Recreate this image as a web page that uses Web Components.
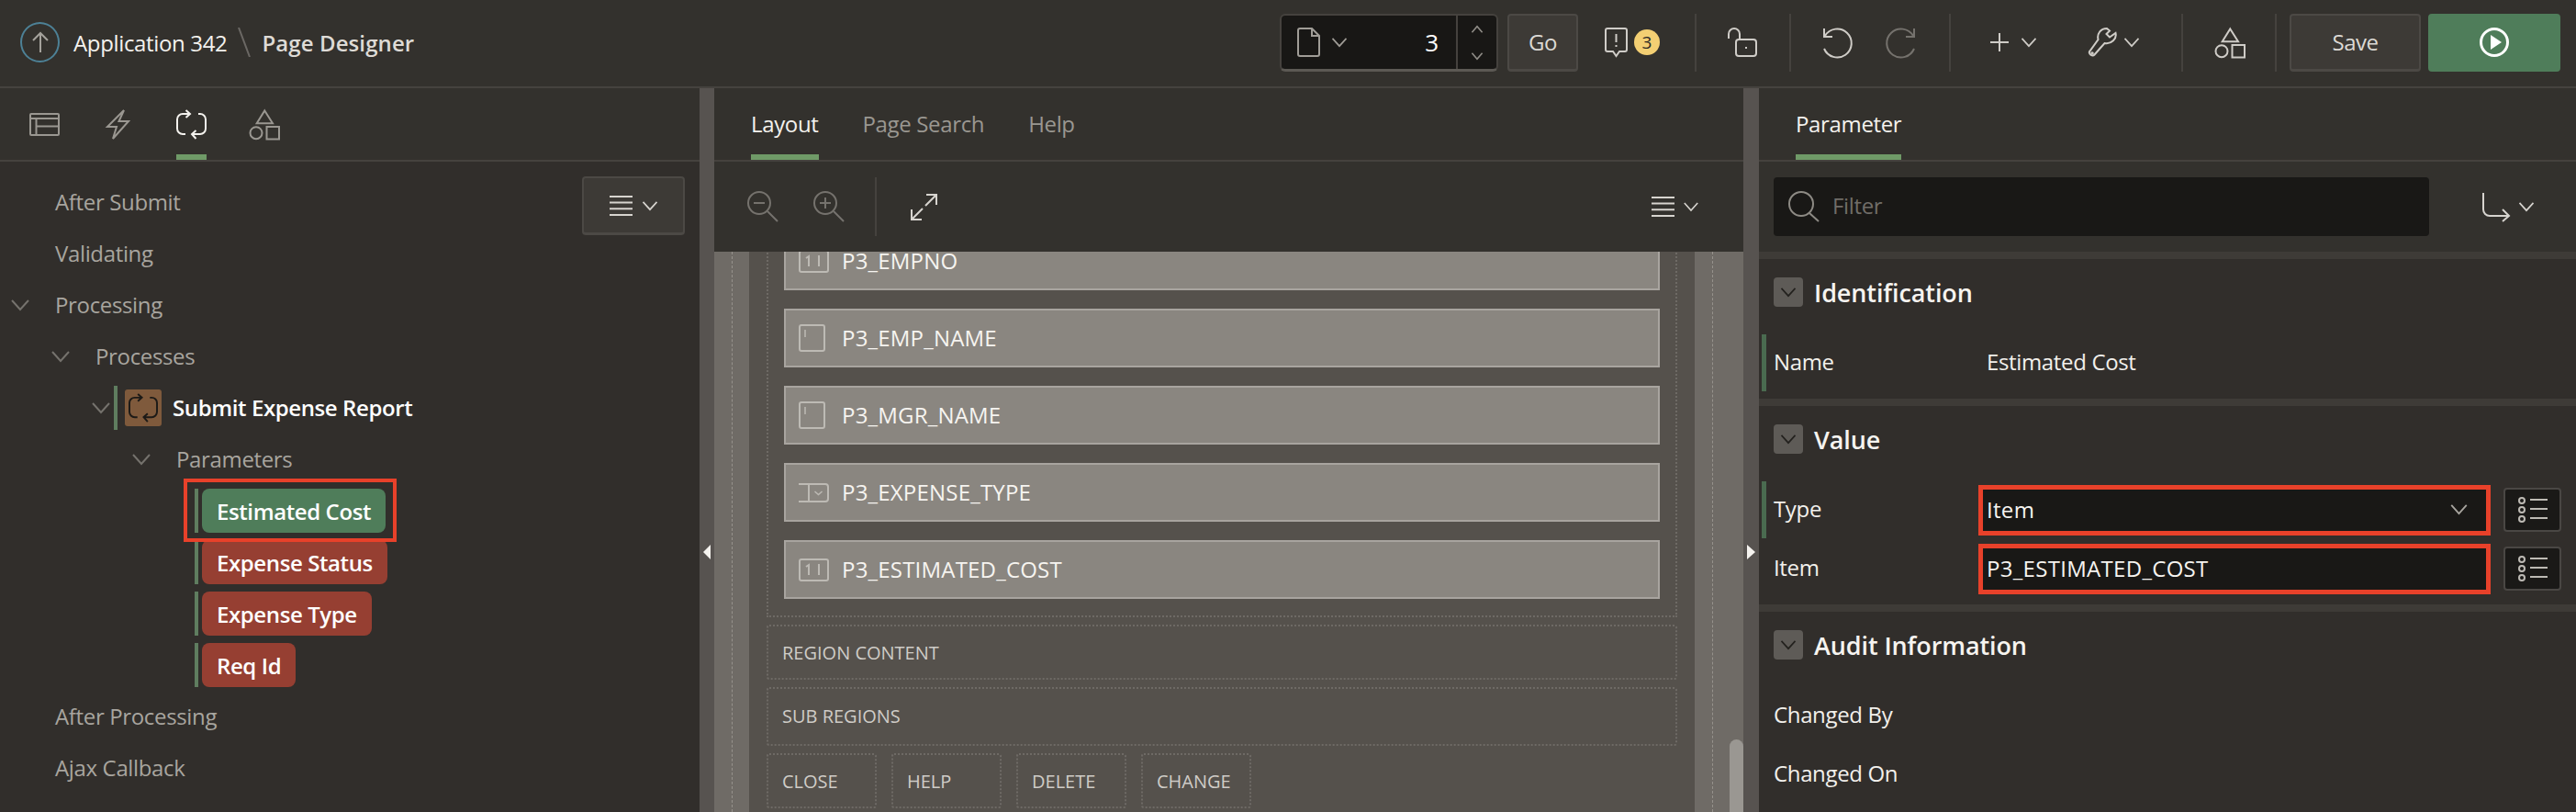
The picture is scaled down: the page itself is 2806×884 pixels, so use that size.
<!DOCTYPE html>
<html>
<head>
<meta charset="utf-8">
<title>Page Designer</title>
<style>
  html, body { margin: 0; padding: 0; background: #312e2b; }
  body { width: 2806px; height: 884px; overflow: hidden; font: 24px "Open Sans", "Liberation Sans", sans-serif; color: #f2f0ec; }
</style>
</head>
<body>
<pd-app>
  <pd-topbar slot="top"></pd-topbar>
  <pd-left slot="left"></pd-left>
  <pd-center slot="center"></pd-center>
  <pd-right slot="right"></pd-right>
</pd-app>

<script>
const ICONS = {
  table: [33, 25, '<rect x="1" y="1" width="31" height="23" rx="1"/><path d="M1 6h31M7.500 6v18M7.500 14.500h24.500"/>'],
  bolt: [25, 33, '<path d="M19 1L1 19h10L7 32l17-19H13.500z"/>'],
  process: [33, 33, '<path d="M15 5H7a6 6 0 0 0-6 6v10a6 6 0 0 0 6 6h3M24 5h2a6 6 0 0 1 6 6v10a6 6 0 0 1-6 6H17M10.500 1l4.500 4-4.500 4M21.500 23l-4.500 4 4.500 5"/>'],
  shapes: [33, 33, '<path d="M16.300 1.500L25 15.300H7.700z"/><circle cx="7" cy="25.700" r="6.500"/><rect x="18.500" y="19" width="13.500" height="13.500"/>'],
  chevron: [20, 12, '<path d="M1 1l9 10 9-10"/>'],
  chevronUp: [16, 10, '<path d="M1 9l7-8 7 8"/>'],
  chevronDown: [16, 10, '<path d="M1 1l7 8 7-8"/>'],
  menu: [25, 22, '<path d="M0 1h25M0 7.600h25M0 14.300h25M0 21h25"/>'],
  up: [20, 22, '<path d="M10 22V1M2 9l8-8 8 8"/>'],
  page: [25, 32, '<path d="M3 1h13l8 8v20a2 2 0 0 1-2 2H3a2 2 0 0 1-2-2V3a2 2 0 0 1 2-2zM16 1v8h8"/>'],
  message: [25, 32, '<path d="M3 1h19a2 2 0 0 1 2 2v21a2 2 0 0 1-2 2h-6l-3.500 5-3.500-5H3a2 2 0 0 1-2-2V3a2 2 0 0 1 2-2z"/><path d="M12.500 7v9M12.500 19v2"/>'],
  lock: [32, 32, '<path d="M1 12V7a6 6 0 0 1 12 0v6"/><rect x="9" y="13" width="22" height="18" rx="3"/><path d="M20 21v2"/>'],
  undo: [31, 33, '<path d="M2 1v9h9M3 9A15.500 15.500 0 1 1 2 23"/>'],
  redo: [31, 33, '<path d="M29 1v9h-9M28 9A15.500 15.500 0 1 0 29 23"/>'],
  plus: [20, 20, '<path d="M10 0v20M0 10h20"/>'],
  wrench: [30, 32, '<path d="M10.500 13C9 7 13 1 20 1l3 2.500L19.500 7l3.500 3.500L29.500 6c1.500 6-4.500 12.500-12 11L6.500 29.500C4 32.500-1 28 1.500 25.500z"/><circle cx="4" cy="28" r=".8"/>'],
  zoomOut: [34, 34, '<circle cx="13" cy="13" r="12"/><path d="M22 22l11 11M7 13h12"/>'],
  zoomIn: [34, 34, '<circle cx="13" cy="13" r="12"/><path d="M22 22l11 11M7 13h12M13 7v12"/>'],
  expand: [29, 29, '<path d="M16 13L28 1M17 1h11v11M13 16L1 28M1 17v11h11"/>'],
  search: [34, 34, '<circle cx="14" cy="14" r="13"/><path d="M23 24l10 9"/>'],
  group: [31, 31, '<path d="M2 0v18a7 7 0 0 0 7 7h20M23 18l7 7-7 6"/>'],
  options: [32, 28, '<circle cx="4" cy="4" r="3"/><circle cx="4" cy="14" r="3"/><circle cx="4" cy="24" r="3"/><path d="M13 3h19M13 13h19M13 23h19"/>'],
  itemNumber: [33, 25, '<rect x="1" y="1" width="31" height="23" rx="2"/><path d="M8 9l3-2v11M22 6v12"/>'],
  itemText: [29, 30, '<rect x="1" y="1" width="27" height="28" rx="2"/><path d="M7 6v8" stroke-width="1.500"/>'],
  itemSelect: [33, 21, '<path d="M0 1h11M0 20h11M11 1v19M11 1h18a3 3 0 0 1 3 3v13a3 3 0 0 1-3 3H11"/><path d="M17.500 9l4 3.500 4-3.500" stroke-width="1.500"/>']
};

class PdIcon extends HTMLElement {
  constructor() {
    super();
    this.attachShadow({ mode: "open" });
  }

  connectedCallback() {
    const icon = ICONS[this.getAttribute("name")];
    const w = this.getAttribute("w") || icon[0];
    const h = this.getAttribute("h") || icon[1];
    this.shadowRoot.innerHTML = `
    <style>
    :host{ display: inline-flex; flex: none; line-height: 0; }
    svg{ fill: none; stroke: currentColor; stroke-width: 2; overflow: visible; }
    </style>
    <svg width="${w}" height="${h}" viewBox="0 0 ${icon[0]} ${icon[1]}">${icon[2]}</svg>`;
  }
}
customElements.define("pd-icon", PdIcon);

class PdApp extends HTMLElement {
  constructor() {
    super();
    this.attachShadow({ mode: "open" }).innerHTML = `
    <style>
    :host{ display: grid; grid-template-columns: 762px 16px 1121px 17px 1fr; grid-template-rows: 96px 788px; width: 2806px; height: 884px; }
    ::slotted([slot=top]){ grid-column: 1 / -1; }
    .split{ background: #575350; display: flex; align-items: center; justify-content: center; }
    .split i{ display: block; width: 0; height: 0; border: 8px solid transparent; margin-top: 222px; }
    .l i{ border-right: 8px solid #f5f3ef; border-left: 0; }
    .r i{ border-left: 9px solid #f5f3ef; border-right: 0; }
    </style>
    <slot name="top"></slot>
    <slot name="left"></slot>
    <div class="split l"><i></i></div>
    <slot name="center"></slot>
    <div class="split r"><i></i></div>
    <slot name="right"></slot>`;
  }
}
customElements.define("pd-app", PdApp);

class PdButton extends HTMLElement {
  constructor() {
    super();
    this.attachShadow({ mode: "open" }).innerHTML = `
    <style>
    :host{ display: inline-flex; box-sizing: border-box; align-items: center; justify-content: center; gap: 10px; height: 63px; flex: none;
      background: #3d3a36; border: 2px solid #4c4945; border-bottom-width: 3px; border-radius: 4px; color: #dcd9d4; font-size: 24px; letter-spacing: -.5px; }
    </style>
    <slot></slot>`;
  }
}
customElements.define("pd-button", PdButton);

class PdTopbar extends HTMLElement {
  constructor() {
    super();
    this.attachShadow({ mode: "open" }).innerHTML = `
    <style>
    :host{ display: flex; box-sizing: border-box; align-items: center; height: 96px; padding: 0 0 2px 22px; background: #33312d; border-bottom: 2px solid #45423e; color: #cfccc7; }
    .home{ box-sizing: border-box; width: 43px; height: 44px; border: 2px solid #4d8196; border-radius: 50%; display: flex; align-items: center; justify-content: center; color: #a5a29c; }
    .app{ margin-left: 15px; font-size: 24px; color: #f4f2ee; letter-spacing: -.35px; }
    .slash{ margin: 0 12px; display: flex; }
    .title{ font-size: 24px; font-weight: 600; color: #dedbd6; letter-spacing: .1px; }
    .tools{ margin-left: auto; display: flex; align-items: center; height: 63px; margin-right: 17px; }
    .sel{ box-sizing: border-box; width: 238px; height: 63px; background: #181715; border: 2px solid #45423e; border-bottom: 3px solid #5c5954; border-radius: 6px; display: flex; align-items: center; }
    .sel .ic{ display: flex; align-items: center; gap: 12px; padding-left: 17px; width: 106px; box-sizing: border-box; color: #a09d97; }
    .sel b{ font-weight: 400; text-align: right; color: #fff; font-size: 26px; box-sizing: border-box; margin-left: 2px; width: 82px; padding-right: 19px; }
    .spin{ flex: 1; align-self: stretch; border-left: 2px solid #45423e; display: flex; flex-direction: column; align-items: center; justify-content: space-between; padding: 11px 0 10px; color: #908d87; box-sizing: border-box; }
    .div{ width: 2px; height: 63px; background: #45423e; flex: none; }
    .badge{ width: 28px; height: 28px; margin-left: 7px; border-radius: 50%; background: #f3cf73; color: #2b2926; font-size: 19px; display: flex; align-items: center; justify-content: center; line-height: 1; }
    .run{ background: #4f7d5a; border-color: #4f7d5a; width: 144px; margin-left: 8px; }
    .play{ box-sizing: border-box; width: 32px; height: 32px; border: 3px solid #fff; border-radius: 50%; display: flex; align-items: center; justify-content: center; }
    .play i{ width: 0; height: 0; border-left: 12px solid #fff; border-top: 8px solid transparent; border-bottom: 8px solid transparent; margin-left: 3px; }
    .dim{ color: #75726d; }
    </style>
    <span class="home"><pd-icon name="up"></pd-icon></span>
    <span class="app">Application 342</span>
    <span class="slash"><svg width="14" height="32"><path d="M1 0l12 32" stroke="#6b6864" stroke-width="2"/></svg></span>
    <span class="title">Page Designer</span>
    <div class="tools">
      <div class="sel">
        <span class="ic"><pd-icon name="page"></pd-icon><pd-icon name="chevron" w="18" h="10"></pd-icon></span>
        <b>3</b>
        <span class="spin"><pd-icon name="chevronUp" w="14" h="8"></pd-icon><pd-icon name="chevronDown" w="14" h="8"></pd-icon></span>
      </div>
      <pd-button style="width:77px;margin-left:10px">Go</pd-button>
      <pd-icon name="message" style="margin-left:29px"></pd-icon>
      <span class="badge">3</span>
      <span class="div" style="margin-left:38px"></span>
      <pd-icon name="lock" style="margin-left:34px"></pd-icon>
      <span class="div" style="margin-left:35px"></span>
      <pd-icon name="undo" style="margin-left:34px"></pd-icon>
      <pd-icon name="redo" class="dim" style="margin-left:40px"></pd-icon>
      <span class="div" style="margin-left:36px"></span>
      <pd-icon name="plus" style="margin-left:43px"></pd-icon>
      <pd-icon name="chevron" w="18" h="10" style="margin-left:13px"></pd-icon>
      <pd-icon name="wrench" style="margin-left:56px"></pd-icon>
      <pd-icon name="chevron" w="18" h="10" style="margin-left:8px"></pd-icon>
      <span class="div" style="margin-left:45px"></span>
      <pd-icon name="shapes" style="margin-left:35px"></pd-icon>
      <span class="div" style="margin-left:32px"></span>
      <pd-button style="width:143px;margin-left:14px">Save</pd-button>
      <pd-button class="run"><span class="play"><i></i></span></pd-button>
    </div>`;
  }
}
customElements.define("pd-topbar", PdTopbar);

class PdTabs extends HTMLElement {
  constructor() {
    super();
    this.attachShadow({ mode: "open" }).innerHTML = `
    <style>
    :host{ display: flex; box-sizing: border-box; height: 80px; background: #33312d; border-bottom: 2px solid #45423e; padding-left: var(--pad, 40px); gap: var(--gap, 48px); flex: none; }
    </style>
    <slot></slot>`;
  }
}
customElements.define("pd-tabs", PdTabs);

class PdTab extends HTMLElement {
  constructor() {
    super();
    this.attachShadow({ mode: "open" }).innerHTML = `
    <style>
    :host{ display: flex; box-sizing: border-box; align-items: center; height: 78px; padding-top: 4px; border-bottom: 6px solid transparent; color: #9a9791; font-size: 24px; letter-spacing: -.35px; white-space: nowrap; }
    :host([active]){ color: #f4f2ee; border-bottom-color: #6f9a67; }
    </style>
    <slot></slot>`;
  }
}
customElements.define("pd-tab", PdTab);

class PdTreeRow extends HTMLElement {
  constructor() {
    super();
    this.attachShadow({ mode: "open" }).innerHTML = `
    <style>
    :host{ display: flex; position: relative; align-items: center; height: 56px; padding-left: var(--indent, 12px); color: #a8a59f; font-size: 24px; letter-spacing: -.35px; white-space: nowrap; }
    .tog{ width: 48px; flex: none; display: flex; color: #75726d; }
    :host([mark]) .tog{ width: 24px; }
    :host([pill]) .tog{ display: none; }
    .bar{ display: none; width: 4px; height: 48px; background: #5f7d5f; margin-right: 4px; flex: none; }
    :host([mark]) .bar, :host([pill]) .bar{ display: block; }
    :host([mark]) .bar{ margin-right: 8px; }
    :host([strong]){ color: #fff; font-weight: 600; letter-spacing: -.4px; }
    :host([strong]) slot[name=icon]{ display: flex; margin-right: 12px; }
    .label{ display: flex; align-items: center; padding-bottom: 2px; }
    :host([pill]) .label{ height: 48px; padding: 0 16px; border-radius: 8px; background: #963f32; color: #fff; font-weight: 600; letter-spacing: -.4px; }
    :host([pill=ok]) .label{ background: #4f7d5a; }
    .note{ display: none; position: absolute; z-index: 1; left: 200px; top: -7px; width: 232px; height: 69px; box-sizing: border-box; border: 4px solid #e8412a; pointer-events: none; }
    :host([note]) .note{ display: block; }
    </style>
    <span class="tog"><slot name="toggle"></slot></span>
    <span class="bar"></span>
    <slot name="icon"></slot>
    <span class="label"><slot></slot></span>
    <span class="note"></span>`;
  }
}
customElements.define("pd-tree-row", PdTreeRow);

class PdLeft extends HTMLElement {
  constructor() {
    super();
    this.attachShadow({ mode: "open" }).innerHTML = `
    <style>
    :host{ display: flex; flex-direction: column; background: #312e2b; min-width: 0; }
    pd-tabs{ --pad: 32px; --gap: 51px; }
    pd-tab{ padding-top: 6px; }
    .body{ display: flex; flex: 1; padding: 16px 16px 0 0; align-items: flex-start; }
    .tree{ flex: 1; }
    .menu{ width: 112px; height: 64px; color: #d7d4cf; }
    .box{ display: flex; align-items: center; justify-content: center; width: 40px; height: 40px; background: #7f5a3c; border-radius: 3px; color: #1c1a17; }
    </style>
    <pd-tabs>
      <pd-tab><pd-icon name="table"></pd-icon></pd-tab>
      <pd-tab><pd-icon name="bolt"></pd-icon></pd-tab>
      <pd-tab active><pd-icon name="process"></pd-icon></pd-tab>
      <pd-tab><pd-icon name="shapes" style="margin-left:-4px"></pd-icon></pd-tab>
    </pd-tabs>
    <div class="body">
      <div class="tree">
        <pd-tree-row>After Submit</pd-tree-row>
        <pd-tree-row>Validating</pd-tree-row>
        <pd-tree-row><pd-icon slot="toggle" name="chevron"></pd-icon>Processing</pd-tree-row>
        <pd-tree-row style="--indent:56px"><pd-icon slot="toggle" name="chevron"></pd-icon>Processes</pd-tree-row>
        <pd-tree-row mark strong style="--indent:100px"><pd-icon slot="toggle" name="chevron"></pd-icon><span slot="icon" class="box"><pd-icon name="process" w="32" h="32"></pd-icon></span>Submit Expense Report</pd-tree-row>
        <pd-tree-row style="--indent:144px"><pd-icon slot="toggle" name="chevron"></pd-icon>Parameters</pd-tree-row>
        <pd-tree-row pill="ok" note style="--indent:212px">Estimated Cost</pd-tree-row>
        <pd-tree-row pill style="--indent:212px">Expense Status</pd-tree-row>
        <pd-tree-row pill style="--indent:212px">Expense Type</pd-tree-row>
        <pd-tree-row pill style="--indent:212px">Req Id</pd-tree-row>
        <pd-tree-row>After Processing</pd-tree-row>
        <pd-tree-row>Ajax Callback</pd-tree-row>
      </div>
      <pd-button class="menu"><pd-icon name="menu"></pd-icon><pd-icon name="chevron" w="18" h="10"></pd-icon></pd-button>
    </div>`;
  }
}
customElements.define("pd-left", PdLeft);

class PdPageItem extends HTMLElement {
  constructor() {
    super();
    this.attachShadow({ mode: "open" }).innerHTML = `
    <style>
    :host{ display: flex; box-sizing: border-box; align-items: center; height: 64px; background: #8a8680; border: 2px solid #a8a49f; padding-left: 14px; color: #f6f4f0; font-size: 24px; line-height: 20px; letter-spacing: .2px; }
    .ic{ width: 47px; flex: none; display: flex; color: #bdbab4; }
    </style>
    <span class="ic"><slot name="icon"></slot></span><slot></slot>`;
  }
}
customElements.define("pd-page-item", PdPageItem);

class PdSlotBox extends HTMLElement {
  constructor() {
    super();
    this.attachShadow({ mode: "open" }).innerHTML = `
    <style>
    :host{ display: flex; box-sizing: border-box; align-items: center; height: 60px; border: 2px dotted #6e6a65; border-radius: 3px; padding-left: 15px; color: #cfccc7; font-size: 20px; }
    </style>
    <slot></slot>`;
  }
}
customElements.define("pd-slot-box", PdSlotBox);

class PdCenter extends HTMLElement {
  constructor() {
    super();
    this.attachShadow({ mode: "open" }).innerHTML = `
    <style>
    :host{ display: flex; flex-direction: column; min-width: 0; background: #33312d; height: 788px; overflow: hidden; }
    pd-tabs{ position: relative; z-index: 1; }
    .bar{ display: flex; position: relative; z-index: 1; box-sizing: border-box; align-items: center; height: 98px; flex: none; padding: 0 49px 0 36px; color: #75726d; background: #33312d; }
    .sep{ width: 2px; height: 64px; background: #45423e; margin: 0 37px 0 33px; }
    .canvas{ flex: 1; display: flex; position: relative; background: #6f6b66; min-height: 0; }
    .strip{ flex: none; width: 38px; box-sizing: border-box; padding-left: 19px; }
    .strip.r{ width: 53px; }
    .strip i{ display: block; height: 100%; width: 0; border-left: 1px dashed #96928c; }
    .main{ flex: 1; background: #55514c; padding: 0 19px; min-width: 0; display: flex; flex-direction: column; gap: 8px; }
    .items{ box-sizing: border-box; margin-top: -22px; padding: 0 17px 18px; border: 2px dotted #6e6a65; border-top: 0; display: flex; flex-direction: column; gap: 20px; }
    .btns{ display: flex; gap: 16px; }
    .btns pd-slot-box{ width: 120px; }
    .sub{ height: 64px; padding-bottom: 2px; }
    .thumb{ position: absolute; right: 0; bottom: 0; width: 15px; height: 79px; background: #9a9792; border-radius: 8px 8px 0 0; }
    </style>
    <pd-tabs>
      <pd-tab active>Layout</pd-tab>
      <pd-tab>Page Search</pd-tab>
      <pd-tab>Help</pd-tab>
    </pd-tabs>
    <div class="bar">
      <pd-icon name="zoomOut"></pd-icon>
      <pd-icon name="zoomIn" style="margin-left:38px"></pd-icon>
      <span class="sep"></span>
      <pd-icon name="expand" style="color:#d7d4cf"></pd-icon>
      <span style="flex:1"></span>
      <pd-icon name="menu" style="color:#d7d4cf"></pd-icon>
      <pd-icon name="chevron" w="16" h="10" style="color:#d7d4cf;margin-left:10px"></pd-icon>
    </div>
    <div class="canvas">
      <div class="strip"><i></i></div>
      <div class="main">
        <div class="items">
          <pd-page-item><pd-icon slot="icon" name="itemNumber"></pd-icon>P3_EMPNO</pd-page-item>
          <pd-page-item><pd-icon slot="icon" name="itemText"></pd-icon>P3_EMP_NAME</pd-page-item>
          <pd-page-item><pd-icon slot="icon" name="itemText"></pd-icon>P3_MGR_NAME</pd-page-item>
          <pd-page-item><pd-icon slot="icon" name="itemSelect"></pd-icon>P3_EXPENSE_TYPE</pd-page-item>
          <pd-page-item><pd-icon slot="icon" name="itemNumber"></pd-icon>P3_ESTIMATED_COST</pd-page-item>
        </div>
        <pd-slot-box>REGION CONTENT</pd-slot-box>
        <pd-slot-box class="sub">SUB REGIONS</pd-slot-box>
        <div class="btns">
          <pd-slot-box>CLOSE</pd-slot-box>
          <pd-slot-box>HELP</pd-slot-box>
          <pd-slot-box>DELETE</pd-slot-box>
          <pd-slot-box>CHANGE</pd-slot-box>
        </div>
      </div>
      <div class="strip r"><i></i></div>
      <div class="thumb"></div>
    </div>`;
  }
}
customElements.define("pd-center", PdCenter);

class PdSection extends HTMLElement {
  constructor() {
    super();
    this.attachShadow({ mode: "open" }).innerHTML = `
    <style>
    :host{ display: block; border-top: 8px solid #3e3b37; padding: 20px 0 8px; }
    .head{ display: flex; align-items: center; height: 32px; padding-left: 16px; margin-bottom: 30px; font-size: 27px; font-weight: 600; color: #f6f4f0; letter-spacing: -.1px; }
    .tog{ display: flex; align-items: center; justify-content: center; width: 32px; height: 32px; border-radius: 4px; background: #5e5b57; color: #23211e; margin-right: 12px; }
    .rows{ display: flex; flex-direction: column; gap: 2px; }
    </style>
    <div class="head"><span class="tog"><pd-icon name="chevron" w="18" h="10"></pd-icon></span><span id="t"></span></div>
    <div class="rows"><slot></slot></div>`;
  }

  connectedCallback() {
    this.shadowRoot.getElementById("t").textContent = this.getAttribute("label");
  }
}
customElements.define("pd-section", PdSection);

class PdProp extends HTMLElement {
  constructor() {
    super();
    this.attachShadow({ mode: "open" }).innerHTML = `
    <style>
    :host{ display: flex; box-sizing: border-box; align-items: center; height: 62px; margin-left: 3px; padding-left: 8px; border-left: 5px solid transparent; color: #f2f0ec; font-size: 24px; letter-spacing: -.35px; }
    :host([changed]){ border-left-color: #4a6b50; }
    .name{ width: 223px; flex: none; padding-bottom: 3px; }
    </style>
    <span class="name" id="n"></span><slot></slot>`;
  }

  connectedCallback() {
    this.shadowRoot.getElementById("n").textContent = this.getAttribute("label");
  }
}
customElements.define("pd-prop", PdProp);

class PdField extends HTMLElement {
  constructor() {
    super();
    this.attachShadow({ mode: "open" }).innerHTML = `
    <style>
    :host{ display: flex; box-sizing: border-box; align-items: center; justify-content: space-between; width: 558px; height: 55px; background: #191816; border: 5px solid #e8412a; padding: 0 20px 2px 4px; color: #f6f4f0; font-size: 24px; letter-spacing: .3px; }
    </style>
    <slot></slot><slot name="end"></slot>`;
  }
}
customElements.define("pd-field", PdField);

class PdRight extends HTMLElement {
  constructor() {
    super();
    this.attachShadow({ mode: "open" }).innerHTML = `
    <style>
    :host{ display: flex; flex-direction: column; background: #312e2b; min-width: 0; overflow: hidden; }
    .filter{ display: flex; align-items: center; height: 98px; box-sizing: border-box; background: #33312d; padding: 0 16px; flex: none; }
    .input{ width: 714px; height: 64px; box-sizing: border-box; background: #191816; border-radius: 4px; display: flex; align-items: center; padding-left: 16px; color: #8d8a84; gap: 14px; font-size: 24px; letter-spacing: -.35px; }
    .input span{ color: #706d68; padding-bottom: 3px; }
    .val{ padding: 0 0 3px 9px; }
    .opt{ display: flex; box-sizing: border-box; align-items: center; justify-content: center; width: 63px; height: 48px; margin-left: 14px; background: #1a1917; border: 2px solid #4a4744; border-radius: 4px; color: #bdbab4; flex: none; }
    </style>
    <pd-tabs><pd-tab active>Parameter</pd-tab></pd-tabs>
    <div class="filter">
      <div class="input"><pd-icon name="search"></pd-icon><span>Filter</span></div>
      <pd-icon name="group" style="margin-left:57px;color:#d7d4cf"></pd-icon>
      <pd-icon name="chevron" w="18" h="10" style="margin-left:9px;color:#d7d4cf"></pd-icon>
    </div>
    <pd-section label="Identification">
      <pd-prop label="Name" changed><span class="val">Estimated Cost</span></pd-prop>
    </pd-section>
    <pd-section label="Value">
      <pd-prop label="Type" changed>
        <pd-field>Item<pd-icon slot="end" name="chevron" w="19" h="11" style="color:#a8a59f"></pd-icon></pd-field>
        <span class="opt"><pd-icon name="options"></pd-icon></span>
      </pd-prop>
      <pd-prop label="Item">
        <pd-field>P3_ESTIMATED_COST</pd-field>
        <span class="opt"><pd-icon name="options"></pd-icon></span>
      </pd-prop>
    </pd-section>
    <pd-section label="Audit Information">
      <pd-prop label="Changed By"></pd-prop>
      <pd-prop label="Changed On"></pd-prop>
    </pd-section>`;
  }
}
customElements.define("pd-right", PdRight);
</script>
</body>
</html>
